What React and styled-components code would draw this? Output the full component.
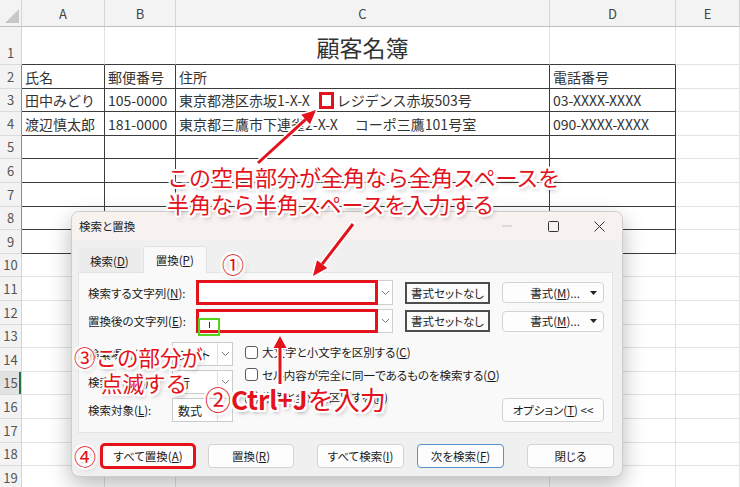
import React from "react";
import styled, { createGlobalStyle } from "styled-components";

const GlobalStyle = createGlobalStyle`
  * { box-sizing: border-box; }
  html, body { margin: 0; padding: 0; background: #fff; }
  body {
    width: 740px;
    height: 487px;
    overflow: hidden;
    font-family: "Noto Sans CJK JP", "Noto Sans", sans-serif;
  }
`;

const RED = "#e3121b";
const LINE = "#3c3c3c";
const GRID = "#e2e2e2";

const Page = styled.div`
  position: relative;
  width: 740px;
  height: 487px;
  overflow: hidden;
`;

/* ---------- spreadsheet ---------- */

const Sheet = styled.div`
  display: grid;
  grid-template-columns: 22px 83px 71px 374px 126px 64px;
  grid-template-rows: 27px 38px repeat(18, 23.6px);
`;

const Corner = styled.div`
  position: relative;
  background: #f3f3f3;
  border-right: 1px solid #d4d4d4;
  border-bottom: 1px solid #bdbdbd;

  &::after {
    content: "";
    position: absolute;
    right: 2px;
    bottom: 3px;
    border-style: solid;
    border-width: 0 0 14px 14px;
    border-color: transparent transparent #c8c8c8 transparent;
  }
`;

const ColHead = styled.div`
  display: flex;
  align-items: center;
  justify-content: center;
  background: #f3f3f3;
  border-right: 1px solid #d4d4d4;
  border-bottom: 1px solid #bdbdbd;
  font-size: 13px;
  color: #444;
`;

const RowHead = styled.div`
  display: flex;
  align-items: flex-end;
  justify-content: center;
  padding-bottom: 2px;
  line-height: 18px;
  background: ${(p) => (p.$selected ? "#e2e2e2" : "#f3f3f3")};
  border-right: 1px solid ${(p) => (p.$dark ? "#8a8a8a" : "#d4d4d4")};
  border-bottom: 1px solid #dadada;
  box-shadow: ${(p) => (p.$selected ? "inset -2px 0 0 #217346" : "none")};
  font-size: 13px;
  color: #555;
`;

const Cell = styled.div`
  display: flex;
  align-items: flex-end;
  justify-content: ${(p) => (p.$title ? "center" : "flex-start")};
  padding: 0 3px 1px;
  line-height: ${(p) => (p.$title ? "32px" : "20px")};
  white-space: nowrap;
  border-right: 1px solid ${(p) => (p.$rDark ? LINE : GRID)};
  border-bottom: 1px solid ${(p) => (p.$bDark ? LINE : GRID)};
  font-size: ${(p) => (p.$title ? "23px" : "14px")};
  color: #333;
`;

/* the red box the picture draws round the blank between the two parts of the address */
const SpaceMark = styled.span`
  display: inline-block;
  width: 15px;
  height: 17px;
  margin: 0 3px 1px 9px;
  border: 3px solid ${RED};
  vertical-align: bottom;
`;

const COLS = ["A", "B", "C", "D", "E"];
const ROWS = Array.from({ length: 19 }, (_, i) => i + 1);
const DATA = {
  1: { C: "顧客名簿" },
  2: { A: "氏名", B: "郵便番号", C: "住所", D: "電話番号" },
  3: {
    A: "田中みどり",
    B: "105-0000",
    C: (
      <>
        東京都港区赤坂1-X-X
        <SpaceMark />
        レジデンス赤坂503号
      </>
    ),
    D: "03-XXXX-XXXX",
  },
  4: {
    A: "渡辺慎太郎",
    B: "181-0000",
    C: "東京都三鷹市下連雀2-X-X　 コーポ三鷹101号室",
    D: "090-XXXX-XXXX",
  },
};

const Spreadsheet = () => (
  <Sheet>
    <Corner />
    {COLS.map((c) => (
      <ColHead key={c}>{c}</ColHead>
    ))}
    {ROWS.map((r) => (
      <React.Fragment key={r}>
        <RowHead $dark={r >= 2 && r <= 9} $selected={r === 15}>
          {r}
        </RowHead>
        {COLS.map((c) => {
          const inTable = c !== "E";
          return (
            <Cell
              key={c}
              $title={r === 1}
              $rDark={inTable && r >= 2 && r <= 9}
              $bDark={inTable && r <= 9}
            >
              {DATA[r] && DATA[r][c]}
            </Cell>
          );
        })}
      </React.Fragment>
    ))}
  </Sheet>
);

/* ---------- dialog ---------- */

const Dialog = styled.div`
  position: absolute;
  left: 71px;
  top: 211px;
  width: 552px;
  height: 266px;
  display: flex;
  flex-direction: column;
  background: #f0f0f0;
  border: 1px solid #cdcdcd;
  border-radius: 8px;
  box-shadow: 0 8px 22px rgba(0, 0, 0, 0.28);
  overflow: hidden;
  font-size: 11.5px;
  color: #1b1b1b;
  font-feature-settings: "palt";
`;

const TitleBar = styled.div`
  display: flex;
  align-items: center;
  height: 28px;
  padding-left: 7px;
  background: #f7f2ef;
`;

const Title = styled.div`
  flex: 1;
  font-size: 11.5px;
  color: #222;
`;

const WinBtn = styled.div`
  width: 46px;
  height: 28px;
  display: flex;
  align-items: center;
  justify-content: center;
`;

const TabStrip = styled.div`
  display: flex;
  align-items: flex-end;
  gap: 2px;
  height: 32px;
  padding-left: 6px;
`;

const Tab = styled.div`
  display: flex;
  align-items: center;
  height: ${(p) => (p.$active ? "27px" : "24px")};
  padding: 0 ${(p) => (p.$active ? "12px" : "11px")};
  background: ${(p) => (p.$active ? "#f9f9f9" : "#ececec")};
  border: 1px solid ${(p) => (p.$active ? "#e2e2e2" : "transparent")};
  border-bottom: none;
  border-radius: 3px 3px 0 0;
  position: relative;
  top: ${(p) => (p.$active ? "1px" : "0")};
`;

const Panel = styled.div`
  height: 161px;
  margin: 0 9px 0 6px;
  padding: 7px 8px 0 9px;
  background: #f9f9f9;
  border: 1px solid #e4e4e4;
`;

const FieldGrid = styled.div`
  display: grid;
  grid-template-columns: 96px 197px 85px 102px;
  grid-template-rows: 25px 24px;
  column-gap: 12px;
  row-gap: 4px;
  align-items: center;
`;

const Label = styled.div`
  white-space: nowrap;
`;

const Combo = styled.div`
  display: flex;
  height: 100%;
  width: 100%;
`;

const TextField = styled.div`
  flex: 1;
  display: flex;
  align-items: flex-end;
  background: #fff;
  border: ${(p) => (p.$marked ? `3px solid ${RED}` : "1px solid #cbcbcb")};
  padding: 0 5px 2px;
  white-space: nowrap;
`;

const Caret = styled.span`
  display: block;
  width: 1px;
  height: 6px;
  margin-left: 5px;
  background: #333;
`;

const DropBtn = styled.div`
  width: 15px;
  display: flex;
  align-items: center;
  justify-content: center;
  background: #fff;
  border: 1px solid #cfcfcf;
  border-left: none;
`;

const FormatPreview = styled.div`
  height: 22px;
  display: flex;
  align-items: center;
  justify-content: center;
  background: #fcfcfc;
  border: 2px solid #4d4d4d;
  white-space: nowrap;
`;

const FormatBtn = styled.div`
  height: 21px;
  display: flex;
  align-items: center;
  padding: 0 6px 0 17px;
  background: #fdfdfd;
  border: 1px solid #d3d3d3;
  border-radius: 4px;
  white-space: nowrap;

  span {
    flex: 1;
    text-align: center;
  }
`;

const Options = styled.div`
  display: flex;
  align-items: flex-start;
  margin-top: 9px;
`;

const LeftCol = styled.div`
  display: grid;
  grid-template-columns: 84px 61px;
  grid-auto-rows: 24px;
  row-gap: 4px;
  align-items: center;
`;

const SmallCombo = styled.div`
  display: flex;
  height: 24px;
  background: #fff;
  border: 1px solid #cbcbcb;

  span {
    flex: 1;
    display: flex;
    align-items: center;
    padding-left: 5px;
    font-size: 12px;
  }
`;

const ComboArrow = styled.div`
  width: 15px;
  display: flex;
  align-items: center;
  justify-content: center;
  border-left: 1px solid #e0e0e0;
`;

const CheckCol = styled.div`
  display: flex;
  flex-direction: column;
  gap: 2.5px;
  margin-left: 12px;
`;

const CheckRow = styled.label`
  display: flex;
  align-items: center;
  gap: 4px;
  height: 20px;
  white-space: nowrap;
`;

const Box = styled.span`
  width: 13px;
  height: 13px;
  border: 1px solid #5a5a5a;
  border-radius: 3px;
  background: #fff;
`;

const Button = styled.div`
  width: ${(p) => p.$w}px;
  height: 24px;
  margin-left: ${(p) => p.$ml || 0}px;
  display: flex;
  align-items: center;
  justify-content: center;
  background: #fdfdfd;
  border: 1px solid ${(p) => (p.$primary ? "#5a8fd0" : "#d3d3d3")};
  border-radius: 4px;
  white-space: nowrap;
  outline: ${(p) => (p.$marked ? `3px solid ${RED}` : "none")};
  outline-offset: -2px;
`;

const OptionBtn = styled(Button)`
  margin-left: auto;
  align-self: flex-end;
`;

const Footer = styled.div`
  display: flex;
  margin-top: 11px;
  padding-left: 29px;
`;

const Chevron = () => (
  <svg width="9" height="6" viewBox="0 0 9 6">
    <path d="M1 1l3.5 3.5L8 1" fill="none" stroke="#7a7a7a" strokeWidth="1" />
  </svg>
);

const Caretdown = () => (
  <svg width="7" height="4" viewBox="0 0 7 4">
    <path d="M0 0h7L3.5 4z" fill="#222" />
  </svg>
);

const FIND_BUTTONS = [
  { t: "すべて置換", k: "A", w: 94, ml: 0, marked: true },
  { t: "置換", k: "R", w: 86, ml: 13 },
  { t: "すべて検索", k: "I", w: 87, ml: 23 },
  { t: "次を検索", k: "F", w: 87, ml: 13, primary: true },
  { t: "閉じる", w: 87, ml: 23 },
];

const CHECKS = [
  ["大文字と小文字を区別する", "C"],
  ["セル内容が完全に同一であるものを検索する", "O"],
  ["半角と全角を区別する", "B"],
];

const SELECTS = [
  ["検索場所", "H", "シート"],
  ["検索方向", "S", "行"],
  ["検索対象", "L", "数式"],
];

const ReplaceDialog = () => (
  <Dialog>
    <TitleBar>
      <Title>検索と置換</Title>
      <WinBtn>
        <svg width="10" height="2" viewBox="0 0 10 2">
          <path d="M0 1h10" stroke="#c2c2c2" strokeWidth="1" />
        </svg>
      </WinBtn>
      <WinBtn>
        <svg width="11" height="11" viewBox="0 0 11 11">
          <rect x="0.5" y="0.5" width="10" height="10" rx="1" fill="none" stroke="#333" />
        </svg>
      </WinBtn>
      <WinBtn>
        <svg width="11" height="11" viewBox="0 0 11 11">
          <path d="M0.5 0.5l10 10M10.5 0.5l-10 10" stroke="#333" strokeWidth="1" />
        </svg>
      </WinBtn>
    </TitleBar>

    <TabStrip>
      <Tab>
        <span>
          検索(<u>D</u>)
        </span>
      </Tab>
      <Tab $active>
        <span>
          置換(<u>P</u>)
        </span>
      </Tab>
    </TabStrip>

    <Panel>
      <FieldGrid>
        <Label>
          検索する文字列(<u>N</u>):
        </Label>
        <Combo>
          <TextField $marked />
          <DropBtn>
            <Chevron />
          </DropBtn>
        </Combo>
        <FormatPreview>書式セットなし</FormatPreview>
        <FormatBtn>
          <span>
            書式(<u>M</u>)...
          </span>
          <Caretdown />
        </FormatBtn>

        <Label>
          置換後の文字列(<u>E</u>):
        </Label>
        <Combo>
          <TextField $marked>
            <Caret />
          </TextField>
          <DropBtn>
            <Chevron />
          </DropBtn>
        </Combo>
        <FormatPreview>書式セットなし</FormatPreview>
        <FormatBtn>
          <span>
            書式(<u>M</u>)...
          </span>
          <Caretdown />
        </FormatBtn>
      </FieldGrid>

      <Options>
        <LeftCol>
          {SELECTS.map(([label, key, value]) => (
            <React.Fragment key={key}>
              <Label>
                {label}(<u>{key}</u>):
              </Label>
              <SmallCombo>
                <span>{value}</span>
                <ComboArrow>
                  <Chevron />
                </ComboArrow>
              </SmallCombo>
            </React.Fragment>
          ))}
        </LeftCol>

        <CheckCol>
          {CHECKS.map(([text, key]) => (
            <CheckRow key={key}>
              <Box />
              <span>
                {text}(<u>{key}</u>)
              </span>
            </CheckRow>
          ))}
        </CheckCol>

        <OptionBtn $w={102}>
          <span>
            オプション(<u>T</u>) &lt;&lt;
          </span>
        </OptionBtn>
      </Options>
    </Panel>

    <Footer>
      {FIND_BUTTONS.map((b) => (
        <Button key={b.t} $w={b.w} $ml={b.ml} $marked={b.marked} $primary={b.primary}>
          <span>
            {b.t}
            {b.k && (
              <>
                (<u>{b.k}</u>)
              </>
            )}
          </span>
        </Button>
      ))}
    </Footer>
  </Dialog>
);

/* ---------- annotations ---------- */

const HALO = [
  "-2px -2px 0 #fff",
  "0 -2px 0 #fff",
  "2px -2px 0 #fff",
  "2px 0 0 #fff",
  "2px 2px 0 #fff",
  "0 2px 0 #fff",
  "-2px 2px 0 #fff",
  "-2px 0 0 #fff",
  "2px 3px 4px rgba(0,0,0,0.35)",
].join(", ");

const Note = styled.div`
  position: absolute;
  left: ${(p) => p.$x}px;
  top: ${(p) => p.$y}px;
  font-size: ${(p) => p.$size}px;
  line-height: ${(p) => p.$lh}px;
  font-weight: 400;
  color: ${RED};
  white-space: nowrap;
  text-shadow: ${HALO};
`;

const Indent = styled.div`
  padding-left: ${(p) => p.$pad}px;
`;

const Strong = styled.span`
  font-weight: 700;
`;

const CaretMark = styled.div`
  position: absolute;
  left: 198px;
  top: 318px;
  width: 22px;
  height: 18px;
  border: 2.5px solid #55d21b;
`;

const ArrowLayer = styled.svg`
  position: absolute;
  left: 0;
  top: 0;
  width: 740px;
  height: 487px;
  pointer-events: none;
`;

const Arrow = ({ x1, y1, x2, y2, head = 14, half = 6.5 }) => {
  const dx = x2 - x1;
  const dy = y2 - y1;
  const len = Math.hypot(dx, dy);
  const ux = dx / len;
  const uy = dy / len;
  const bx = x2 - ux * head;
  const by = y2 - uy * head;
  const pts = `${x2},${y2} ${bx - uy * half},${by + ux * half} ${bx + uy * half},${by - ux * half}`;
  return (
    <g>
      <line x1={x1} y1={y1} x2={bx} y2={by} stroke="#fff" strokeWidth="6" strokeLinecap="round" />
      <polygon points={pts} fill="#fff" stroke="#fff" strokeWidth="3" strokeLinejoin="round" />
      <line x1={x1} y1={y1} x2={bx} y2={by} stroke={RED} strokeWidth="3" />
      <polygon points={pts} fill={RED} />
    </g>
  );
};

const Annotations = () => (
  <>
    <CaretMark />
    <ArrowLayer viewBox="0 0 740 487">
      <Arrow x1={258} y1={163} x2={316} y2={110} />
      <Arrow x1={353} y1={224} x2={313} y2={276} head={15} />
      <Arrow x1={280} y1={384} x2={280} y2={336} head={12} />
    </ArrowLayer>

    <Note $x={167} $y={163} $size={22} $lh={27}>
      この空白部分が全角なら全角スペースを
      <br />
      半角なら半角スペースを入力する
    </Note>

    <Note $x={222} $y={252} $size={22} $lh={22}>
      ①
    </Note>

    <Note $x={74} $y={344} $size={21.5} $lh={26}>
      ③この部分が
      <Indent $pad={27}>点滅する</Indent>
    </Note>

    <Note $x={205} $y={386} $size={26} $lh={26}>
      ②<Strong>Ctrl+J</Strong>を入力
    </Note>

    <Note $x={74} $y={444} $size={22} $lh={22}>
      ④
    </Note>
  </>
);

const App = () => (
  <Page>
    <GlobalStyle />
    <Spreadsheet />
    <ReplaceDialog />
    <Annotations />
  </Page>
);

export default App;
